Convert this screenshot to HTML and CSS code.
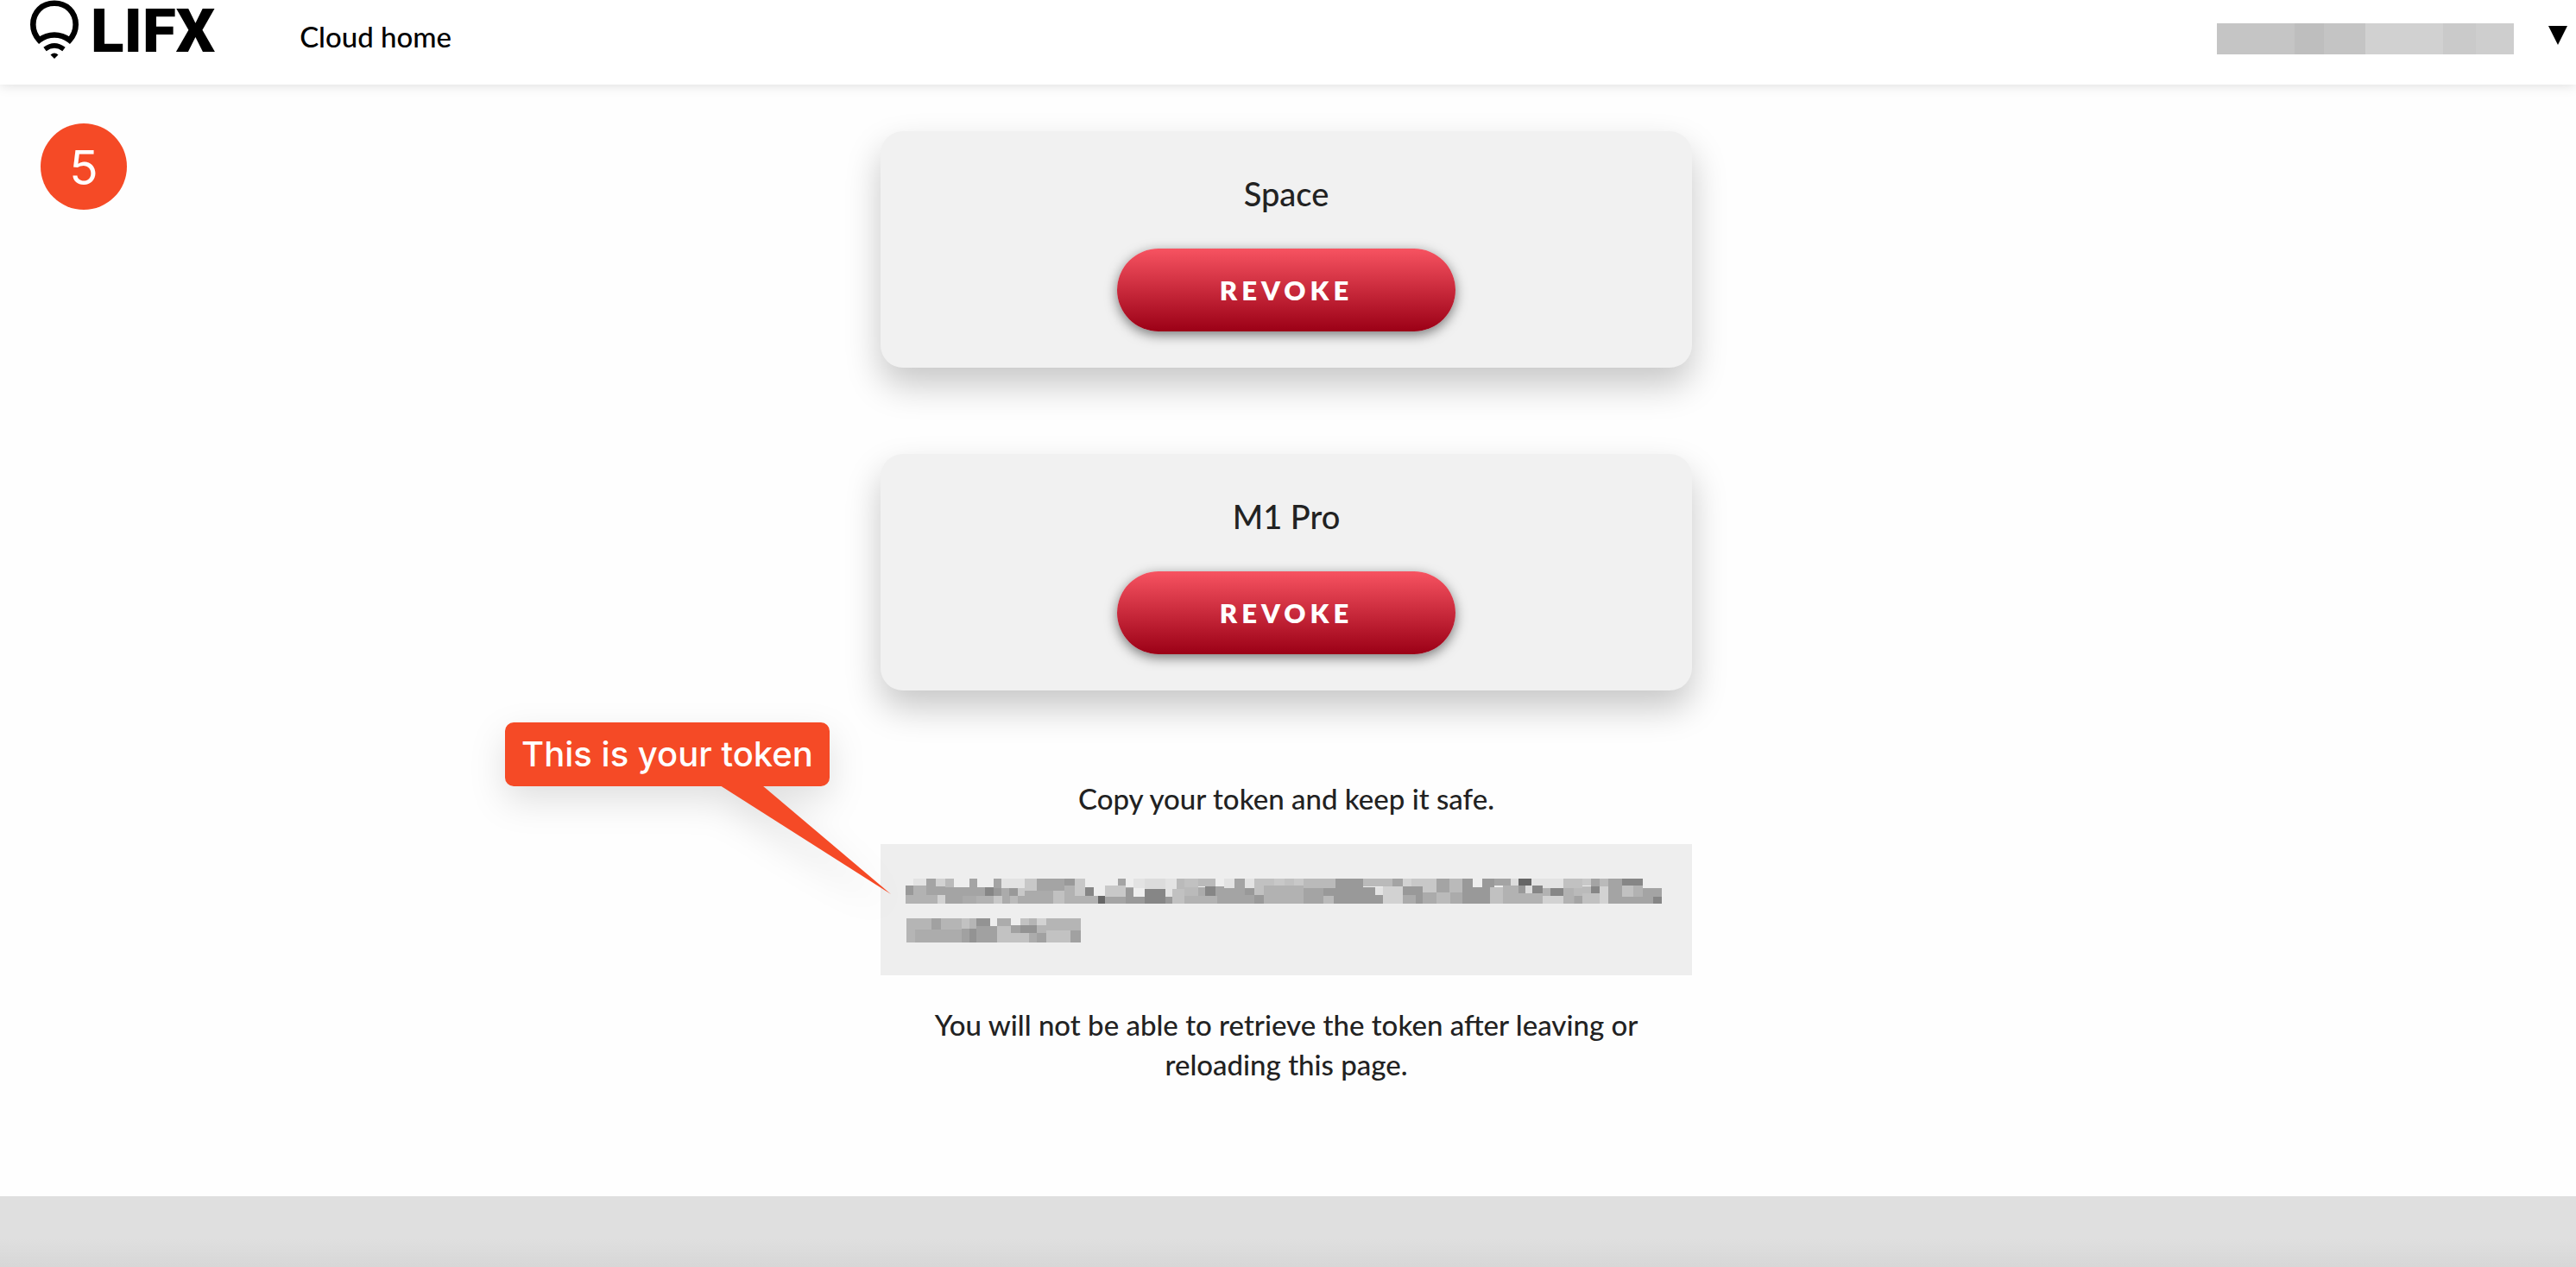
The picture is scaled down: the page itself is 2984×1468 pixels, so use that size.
FILE: index.html
```html
<!DOCTYPE html>
<html lang="en">
<head>
<meta charset="utf-8">
<meta name="viewport" content="width=device-width, initial-scale=1">
<title>LIFX Cloud</title>
<link rel="stylesheet" href="styles.css">
</head>
<body>
<header class="topbar">
  <a class="brand" href="#" aria-label="LIFX">
    <svg class="brand-mark" viewBox="0 0 56 68" aria-hidden="true">
      <path d="M10.500 46.500C6 41.500 3.300 36 3.300 28.500C3.300 13.500 14 3.800 28 3.800S52.700 13.500 52.700 28.500C52.700 36 50 41.500 45.500 46.500C35 38.500 21 38.500 10.500 46.500Z" fill="none" stroke="#000" stroke-width="6.600"/>
      <path d="M17 57Q28 48.800 39 57" fill="none" stroke="#000" stroke-width="5.600"/>
      <path d="M23.500 63.500Q28 59.500 32.500 63.500L28 68Z"/>
    </svg>
    <span class="brand-name">LIFX</span>
  </a>
  <nav class="nav"><a class="nav-link" href="#">Cloud home</a></nav>
  <button class="account" type="button" aria-label="Account menu">
    <svg class="account-name" viewBox="0 0 344 36" shape-rendering="crispEdges" aria-hidden="true">
      <path fill="#c5c5c5" d="M0 0h90v36H0z"/>
      <path fill="#bebebe" d="M90 0h34v36H90z"/>
      <path fill="#c4c4c4" d="M124 0h48v36h-48z"/>
      <path fill="#d1d1d1" d="M172 0h90v36h-90z"/>
      <path fill="#cacaca" d="M262 0h38v36h-38z"/>
      <path fill="#cecece" d="M300 0h44v36h-44z"/>
    </svg>
    <svg class="caret" viewBox="0 0 22 22" aria-hidden="true"><path d="M0 0h22L11 22z"/></svg>
  </button>
</header>

<main class="page">
  <span class="step">5</span>
  <div class="column">
    <section class="card">
      <h2 class="card-title">Space</h2>
      <button class="revoke" type="button">REVOKE</button>
    </section>
    <section class="card">
      <h2 class="card-title">M1 Pro</h2>
      <button class="revoke" type="button">REVOKE</button>
    </section>
    <p class="note">Copy your token and keep it safe.</p>
    <div class="token">
      <svg class="token-value" viewBox="117 174 2628 222" shape-rendering="crispEdges" role="img" aria-label="Hidden token">
        <path fill="#ababab" d="M117 204H2745V261H117z"/>
        <path fill="#e3e3e3" d="M144 174h45v30h-45zM450 174h81v33h-81zM909 174h39v33h-39zM1020 174h39v63h-39zM1224 174h36v33h-36zM1296 174h33v33h-33zM1749 204h27v27h-27zM2292 174h111v33h-111z"/>
        <path fill="#d2d2d2" d="M222 174h33v27h-33zM228 231h27v30h-27zM1776 201h69v60h-69zM1845 174h30v27h-30zM573 312h33v24h-33zM2331 234h72v27h-72zM2529 201h30v60h-30z"/>
        <path fill="#eee" d="M771 174h84v30h-84zM771 204h39v30h-39zM909 207h39v30h-39zM2679 174h66v33h-66z"/>
        <path fill="#dcdcdc" d="M948 174h72v36h-72zM2220 174h27v24h-27zM2271 198h24v27h-24z"/>
        <path fill="#c8c8c8" d="M507 207h24v27h-24zM531 174h42v42h-42zM705 174h36v60h-36zM810 198h72v39h-72zM423 234h30v27h-30zM1398 174h36v24h-36zM1467 174h33v24h-33zM2469 174h30v24h-30zM1875 174h87v48h-87z"/>
        <path fill="#c1c1c1" d="M1086 174h48v31h-48zM1044 210h42v51h-42zM1329 174h33v57h-33zM1362 174h36v24h-36zM1434 174h33v24h-33zM630 216h39v45h-39zM2403 174h66v33h-66zM2148 204h45v57h-45zM2469 225h60v36h-60zM2607 198h39v39h-39z"/>
        <path fill="#bababa" d="M255 174h30v30h-30zM480 234h27v27h-27zM1059 174h27v36h-27zM1134 174h60v27h-60zM1086 205h48v28h-48zM1500 174h111v33h-111zM1707 174h102v27h-102zM2439 207h30v27h-30zM2529 174h30v27h-30zM1569 234h36v27h-36zM2007 174h45v48h-45zM1962 222h48v39h-48zM2469 201h30v24h-30z"/>
        <path fill="#b2b2b2" d="M117 231h111v30H117zM144 198h45v33h-45zM363 234h60v27h-60zM669 198h36v63h-36zM705 234h81v27h-81zM1086 233h114v28h-114zM1362 198h138v63h-138zM2193 198h54v63h-54zM2247 225h84v36h-84zM2331 207h27v27h-27zM2403 207h36v54h-36zM2646 198h33v39h-33z"/>
        <path fill="#a4a4a4" d="M189 174h33v57h-33zM339 174h27v30h-27zM423 174h27v33h-27zM222 201h33v30h-33zM255 204h60v57h-60zM315 204h78v30h-78zM573 174h96v42h-96zM855 174h27v24h-27zM810 237h72v24h-72zM1200 207h129v54h-129zM1194 201h30v33h-30zM1260 174h36v33h-36zM1500 207h69v54h-69zM1809 174h36v27h-36zM1962 174h45v48h-45zM2163 174h57v24h-57zM2499 174h30v27h-30zM2559 174h48v87h-48zM2607 237h108v24h-108zM2679 207h66v30h-66zM2442 234h27v27h-27z"/>
        <path fill="#999" d="M117 198h27v33h-27zM423 207h27v27h-27zM477 207h30v27h-30zM669 174h36v24h-36zM882 207h27v54h-27zM909 237h39v24h-39zM1020 237h24v24h-24zM1329 231h33v30h-33zM1296 207h33v24h-33zM1569 207h42v27h-42zM1605 234h12v27h-12zM1611 174h96v87h-96zM1707 204h42v27h-42zM1707 231h69v30h-69zM1845 201h69v30h-69zM1890 231h24v30h-24zM2052 174h36v30h-36zM2121 174h42v30h-42zM2052 204h96v57h-96zM2247 198h24v27h-24z"/>
        <path fill="#868686" d="M393 204h30v30h-30zM741 204h30v30h-30zM948 210h72v51h-72zM1158 201h36v33h-36zM2295 198h36v27h-36zM2358 207h45v27h-45zM2499 201h30v24h-30zM2607 174h72v24h-72zM2715 237h30v24h-30z"/>
        <path fill="#666" d="M786 234h24v27h-24zM2247 174h45v24h-45z"/>
        <path fill="#b5b5b5" d="M120 312h606v84H120z"/>
        <path fill="#acacac" d="M150 351h162v45H150zM435 312h48v26h-48zM546 363h27v33h-27z"/>
        <path fill="#c2c2c2" d="M312 312h27v36h-27zM435 338h111v58H435zM516 312h30v24h-30zM606 354h84v42h-84z"/>
        <path fill="#eee" d="M411 312h24v27h-24zM483 312h33v24h-33z"/>
        <path fill="#d2d2d2" d="M573 312h33v24h-33z"/>
        <path fill="#a1a1a1" d="M207 312h33v39h-33zM312 348h27v48h-27zM363 339h72v57h-72zM483 336h33v27h-33zM573 363h33v33h-33zM690 354h36v42h-36z"/>
        <path fill="#939393" d="M363 312h48v27h-48zM339 348h24v48h-24zM516 336h57v27h-57z"/>
      </svg>
      <div class="callout">
        <svg class="callout-tail" viewBox="0 0 198 126" aria-hidden="true"><path d="M0 0H49L198 126z"/></svg>
        <span class="callout-text">This is your token</span>
      </div>
    </div>
    <p class="note">You will not be able to retrieve the token after leaving or reloading this page.</p>
  </div>
</main>
<footer class="footer"></footer>
</body>
</html>
```
FILE: styles.css
```css
* { box-sizing: border-box; }

body {
  margin: 0;
  min-height: 100vh;
  display: flex;
  flex-direction: column;
  background: #fefefe;
  color: #222;
  font-family: Lato, "Open Sans", sans-serif;
  font-size: 33px;
  font-weight: 500;
  line-height: 46px;
}

.topbar {
  position: relative;
  display: flex;
  align-items: flex-start;
  height: 98px;
  padding: 0 10px 0 35px;
  background: #fff;
  box-shadow: 0 0 14px rgba(0, 0, 0, 0.15);
}

.brand {
  display: flex;
  gap: 14px;
  color: #000;
  text-decoration: none;
}

.brand-mark { width: 56px; height: 68px; }

.brand-name {
  font-family: Roboto, sans-serif;
  font-size: 71px;
  font-weight: 900;
  line-height: 72px;
}

.nav { margin-left: 98px; padding-top: 19px; }
.nav-link { color: #000; text-decoration: none; }

.account {
  display: flex;
  gap: 40px;
  margin-left: auto;
  padding: 27px 0 0;
  border: 0;
  background: none;
}

.account-name { width: 344px; height: 36px; }
.caret { width: 22px; height: 22px; margin-top: 3px; }

.page {
  position: relative;
  padding: 54px 24px 130px 20px;
}

.step {
  position: absolute;
  left: 47px;
  top: 45px;
  width: 100px;
  height: 100px;
  border-radius: 50%;
  background: #f54a26;
  color: #fff;
  font-family: Inter, sans-serif;
  font-size: 55px;
  font-weight: 400;
  line-height: 102px;
  text-align: center;
}

.column {
  display: flex;
  flex-direction: column;
  max-width: 940px;
  margin: 0 auto;
}

.card {
  display: flex;
  flex-direction: column;
  align-items: center;
  gap: 36px;
  margin-bottom: 100px;
  padding: 44px 40px 42px;
  border-radius: 26px;
  background: #f1f1f1;
  box-shadow: 0 20px 40px rgba(0, 0, 0, 0.22);
}

.card-title {
  margin: 0;
  font-size: 38px;
  font-weight: 500;
  line-height: 56px;
}

.revoke {
  width: 392px;
  height: 96px;
  border: 0;
  border-radius: 48px;
  background: linear-gradient(#f75361, #9b0016);
  box-shadow: 0 4px 14px rgba(0, 0, 0, 0.5);
  color: #fff;
  font-family: inherit;
  font-size: 31px;
  font-weight: 800;
  letter-spacing: 5px;
}

.note {
  margin: 0;
  padding: 0 40px;
  text-align: center;
}

.card + .note { margin-top: 2px; }

.token {
  position: relative;
  margin: 30px 0 34px;
  padding: 40px 29px 38px;
  background: #eee;
}

.token-value { display: block; width: 876px; max-width: 100%; }

.callout {
  position: absolute;
  left: -435px;
  top: -141px;
  width: 376px;
  height: 74px;
  border-radius: 10px;
  background: #f54a26;
  color: #fff;
  font-family: Inter, sans-serif;
  font-size: 40px;
  line-height: 74px;
  text-align: center;
  filter: drop-shadow(0 16px 20px rgba(0, 0, 0, 0.12));
}

.callout-tail {
  position: absolute;
  left: 249px;
  top: 73px;
  width: 198px;
  height: 126px;
  fill: #f54a26;
}

.footer {
  flex: 1;
  min-height: 80px;
  background: linear-gradient(#dfdfdf 60%, #d7d7d7);
}
```
